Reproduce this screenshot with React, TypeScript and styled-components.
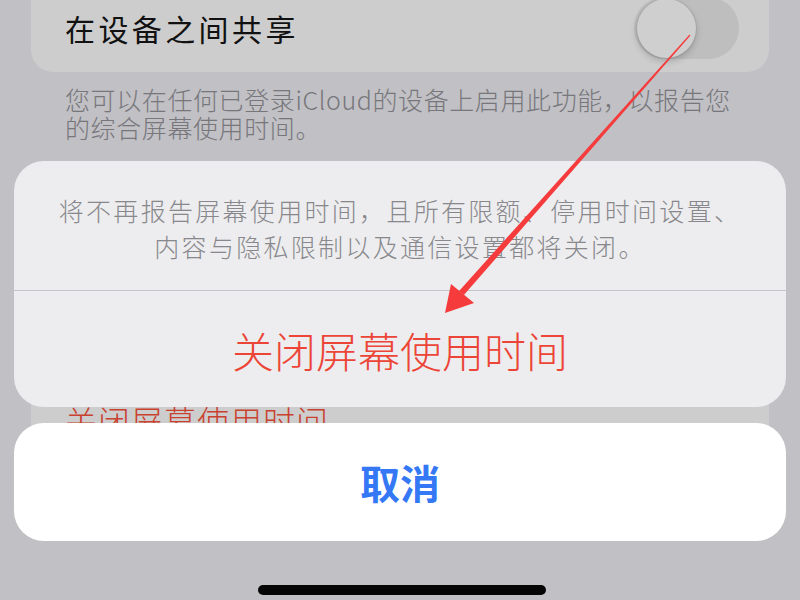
import React from 'react';
import styled, { createGlobalStyle } from 'styled-components';

const GlobalStyle = createGlobalStyle`
    html, body { margin: 0; padding: 0; }
    body {
        font-family: "Noto Sans CJK SC", "Noto Sans", sans-serif;
        background: #c1c0c5;
    }
`;

const Screen = styled.div`
    position: relative;
    width: 800px;
    height: 600px;
    overflow: hidden;
    background: #c1c0c5;
`;

const Group = styled.div<{ $top: number }>`
    margin: ${p => p.$top}px 31px 0 31px;
    background: #cdcdcd;
    border-radius: 22px;
`;

const SwitchRow = styled.div`
    height: 116px;
    box-sizing: border-box;
    display: flex;
    align-items: flex-end;
    justify-content: space-between;
    padding: 0 30px 13px 34px;
`;

const RowInner = styled.div`
    flex: 1;
    height: 62px;
    display: flex;
    align-items: center;
    justify-content: space-between;
`;

const RowTitle = styled.span`
    font-size: 30px;
    letter-spacing: 3.4px;
    color: #111;
`;

const Track = styled.div`
    position: relative;
    width: 105px;
    height: 62px;
    border-radius: 31px;
    background: #bebebe;
`;

const Knob = styled.div`
    position: absolute;
    left: 3px;
    top: 2px;
    width: 59px;
    height: 59px;
    border-radius: 50%;
    background: #cfcfcf;
    box-shadow: 0 3px 7px rgba(0, 0, 0, 0.2), 0 0 0 1px rgba(0, 0, 0, 0.06);
`;

const Footer = styled.p`
    margin: 13px 31px 0 31px;
    padding: 0 34px;
    font-size: 25px;
    font-weight: 300;
    line-height: 28px;
    letter-spacing: 0.6px;
    color: #77777b;
    white-space: pre-line;
`;

const DangerRow = styled.div`
    height: 80px;
    display: flex;
    align-items: center;
    padding-left: 34px;
    font-size: 32px;
    font-weight: 300;
    letter-spacing: 1px;
    color: #c9412f;
`;

const SheetArea = styled.div`
    position: absolute;
    left: 14px;
    right: 14px;
    top: 161px;
    display: flex;
    flex-direction: column;
    gap: 16px;
`;

const Sheet = styled.div`
    background: #ededef;
    border-radius: 30px;
    overflow: hidden;
`;

const Message = styled.div`
    padding: 31px 20px 26px;
    border-bottom: 1px solid #c6c6ca;
    text-align: center;
    font-size: 25px;
    font-weight: 300;
    line-height: 36px;
    letter-spacing: 2.3px;
    color: #88888c;
    white-space: pre-line;
`;

const SheetButton = styled.div<{ $cancel?: boolean }>`
    height: ${p => (p.$cancel ? 118 : 116)}px;
    display: flex;
    align-items: center;
    justify-content: center;
    font-size: ${p => (p.$cancel ? 40 : 42)}px;
    font-weight: ${p => (p.$cancel ? 700 : 300)};
    color: ${p => (p.$cancel ? '#3478f6' : '#ec4537')};
    background: ${p => (p.$cancel ? '#ffffff' : 'transparent')};
    border-radius: ${p => (p.$cancel ? '30px' : '0')};
`;

const HomeBar = styled.div`
    position: absolute;
    left: 258px;
    bottom: 5px;
    width: 288px;
    height: 10px;
    border-radius: 5px;
    background: #050505;
`;

const Annotation = styled.svg`
    position: absolute;
    left: 0;
    top: 0;
    pointer-events: none;
`;

const RedArrow = () => {
    // shaft tapers from the top end to the head
    const top = { x: 690, y: 35 };
    const base = { x: 461.5, y: 293 };
    const px = 0.749, py = 0.662;
    const shaft = [
        [top.x + px * 0.6, top.y + py * 0.6],
        [base.x + px * 3.2, base.y + py * 3.2],
        [base.x - px * 3.2, base.y - py * 3.2],
        [top.x - px * 0.6, top.y - py * 0.6],
    ].map(p => p.join(',')).join(' ');
    return (
        <Annotation width="800" height="600" viewBox="0 0 800 600">
            <polygon points={shaft} fill="#f53b3b" />
            <polygon points="445,313 451,284 474,303" fill="#f53b3b" />
        </Annotation>
    );
};

const App = () => {
    return (
        <Screen>
            <GlobalStyle />
            <Group $top={-44}>
                <SwitchRow>
                    <RowInner>
                        <RowTitle>在设备之间共享</RowTitle>
                        <Track><Knob /></Track>
                    </RowInner>
                </SwitchRow>
            </Group>
            <Footer>{'您可以在任何已登录iCloud的设备上启用此功能，以报告您\n的综合屏幕使用时间。'}</Footer>
            <Group $top={239}>
                <DangerRow>关闭屏幕使用时间</DangerRow>
            </Group>

            <SheetArea>
                <Sheet>
                    <Message>{'将不再报告屏幕使用时间，且所有限额、停用时间设置、\n内容与隐私限制以及通信设置都将关闭。'}</Message>
                    <SheetButton>关闭屏幕使用时间</SheetButton>
                </Sheet>
                <SheetButton $cancel>取消</SheetButton>
            </SheetArea>

            <HomeBar />
            <RedArrow />
        </Screen>
    );
};

export default App;
